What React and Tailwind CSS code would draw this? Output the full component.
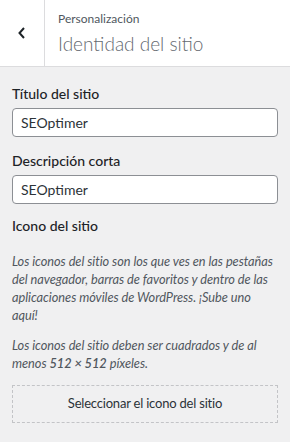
import React from "react"

function App() {
    return (
        <div className="w-[290px] h-[442px] bg-[#f0f0f1] overflow-hidden" style={{ fontFamily: 'Lato, sans-serif' }}>
            <div className="flex flex-row h-[67px] bg-white border-b border-[#dcdcde]">
                <div className="w-[45px] flex items-center justify-center border-r border-[#dcdcde]">
                    <svg width="10" height="14" viewBox="0 0 10 14">
                        <path d="M7 2 L2.5 7 L7 12" fill="none" stroke="#1d2327" strokeWidth="2" />
                    </svg>
                </div>
                <div className="flex flex-col pl-[13px] pt-[11px]">
                    <div className="text-[12px] leading-[16px] text-[#50575e]">Personalización</div>
                    <div className="text-[19px] leading-[28px] font-light text-[#646970] mt-[3px]">Identidad del sitio</div>
                </div>
            </div>
            <div className="px-[12px] pt-[17px]">
                <div className="text-[14px] leading-[20px] font-medium text-[#1d2327]">Título del sitio</div>
                <div className="mt-[4px] h-[29px] bg-white border border-[#8c8f94] rounded-[4px] flex items-center px-[8px] text-[14px] text-[#2c3338]">SEOptimer</div>
                <div className="mt-[14px] text-[14px] leading-[20px] font-medium text-[#1d2327]">Descripción corta</div>
                <div className="mt-[4px] h-[29px] bg-white border border-[#8c8f94] rounded-[4px] flex items-center px-[8px] text-[14px] text-[#2c3338]">SEOptimer</div>
                <div className="mt-[12px] text-[14px] leading-[20px] font-medium text-[#1d2327]">Icono del sitio</div>
                <p className="mt-[16px] text-[12.8px] leading-[18px] tracking-[-0.05px] italic text-[#50575e]">Los iconos del sitio son los que ves en las pestañas del navegador, barras de favoritos y dentro de las aplicaciones móviles de WordPress. ¡Sube uno aquí!</p>
                <p className="mt-[12px] text-[12.8px] leading-[18px] tracking-[-0.05px] italic text-[#50575e]">Los iconos del sitio deben ser cuadrados y de al menos <span className="font-semibold">512 × 512</span> píxeles.</p>
                <div className="mt-[13px] h-[38px] border border-dashed border-[#c3c4c7] flex items-center justify-center text-[13px] tracking-[-0.2px] text-[#2c3338]">Seleccionar el icono del sitio</div>
            </div>
        </div>
    )
}

export default App
